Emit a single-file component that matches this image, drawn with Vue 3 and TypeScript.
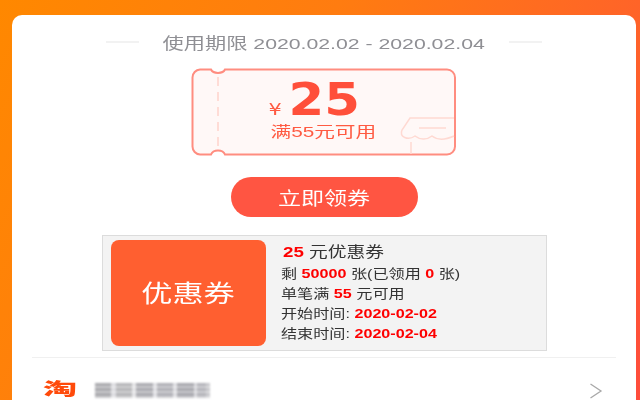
<script setup lang="ts">
const blocks: { w: number; c: string }[] = [
  { w: 16, c: '#a9a9ad' }, { w: 5, c: '#dcdce0' }, { w: 16, c: '#b5b5b8' }, { w: 4, c: '#e4e4e6' },
  { w: 17, c: '#aaaab0' }, { w: 4, c: '#e0e0e4' }, { w: 16, c: '#b0b0b6' }, { w: 4, c: '#dedee2' },
  { w: 17, c: '#a8a8ae' }, { w: 3, c: '#d8d8dc' }, { w: 9, c: '#b4b4ba' }, { w: 4, c: '#c8c8cc' }
]
</script>

<template>
  <div class="page">
    <main class="card">
      <header class="period">
        <span class="rule"></span>
        <div class="period-box"><span class="period-text">使用期限 2020.02.02 - 2020.02.04</span></div>
        <span class="rule"></span>
      </header>

      <section class="ticket">
        <svg class="ticket-bg" width="266" height="88" viewBox="0 0 266 88" fill="none">
          <path d="M9 1.500H20C22 6 32 6 34 1.500H256A8 8 0 0 1 264 9.500V78.500A8 8 0 0 1 256 86.500H34C32 81 22 81 20 86.500H9A8 8 0 0 1 1.500 78.500V9.500A8 8 0 0 1 9 1.500Z" fill="#fff8f7" stroke="#ff8d80" stroke-width="2"/>
          <path d="M27 9V84" stroke="#ffdcd6" stroke-width="2" stroke-dasharray="9 6"/>
          <path d="M263 50H219L211 62C208 69 217 73 224 68C229 72 236 72 241 68C246 72 254 72 263 68" stroke="#ffd9d2" stroke-width="1.500"/>
          <path d="M228 60H255M220 74V86" stroke="#ffd9d2" stroke-width="1.500"/>
        </svg>
        <div class="amount">
          <span class="yen">¥</span>
          <span class="value">25</span>
        </div>
        <div class="threshold">满55元可用</div>
      </section>

      <button class="claim" type="button"><span>立即领券</span></button>

      <section class="info">
        <div class="badge"><span>优惠券</span></div>
        <div class="details">
          <div class="title"><b>25</b> 元优惠券</div>
          <div class="line">剩 <b>50000</b> 张(已领用 <b>0</b> 张)</div>
          <div class="line">单笔满 <b>55</b> 元可用</div>
          <div class="line">开始时间: <b>2020-02-02</b></div>
          <div class="line">结束时间: <b>2020-02-04</b></div>
        </div>
      </section>

      <footer class="shop">
        <span class="tao">淘</span>
        <div class="blur-name">
          <i v-for="(b, i) in blocks" :key="i" :style="{ width: b.w + 'px', background: b.c }"></i>
        </div>
        <svg class="chevron" width="14" height="16" viewBox="0 0 14 16" fill="none">
          <path d="M1.500 1L12 8L1.500 15" stroke="#a8a8a8" stroke-width="1.300"/>
        </svg>
      </footer>
    </main>
  </div>
</template>

<style>
html, body { margin: 0; overflow: hidden; }
</style>

<style scoped>
.page {
  box-sizing: border-box;
  width: 640px;
  height: 400px;
  overflow: hidden;
  padding: 15px 4px 0 12px;
  background: linear-gradient(118deg, #ff8800 0%, #ff7c10 40%, #ff6428 75%, #ff4c3c 100%);
  font-family: "Noto Sans CJK SC", "Liberation Sans", sans-serif;
}
.card {
  height: 385px;
  padding: 0 20px;
  background: #fff;
  border-radius: 10px 10px 0 0;
  display: flex;
  flex-direction: column;
  align-items: center;
}
.period {
  margin-top: 17px;
  height: 20px;
  display: flex;
  align-items: center;
  gap: 24px;
}
.rule { width: 33px; height: 2px; background: #f2f2f2; }
.period-box { width: 322px; display: flex; justify-content: center; }
.period-text {
  flex: none;
  font-family: "Liberation Sans", "Noto Sans CJK SC", sans-serif;
  font-size: 15.500px;
  color: #8f8f94;
  white-space: nowrap;
  transform: scaleX(1.370);
}
.ticket {
  position: relative;
  margin-top: 16px;
  width: 266px;
  height: 88px;
  flex: none;
  display: flex;
  flex-direction: column;
  align-items: center;
}
.ticket-bg { position: absolute; left: 0; top: 0; }
.amount {
  position: relative;
  display: flex;
  align-items: baseline;
  margin-top: 10px;
  margin-left: -22px;
  height: 44px;
}
.yen {
  font-family: "DejaVu Sans", sans-serif;
  font-size: 16px;
  color: #ff5a42;
  margin-right: 13px;
  transform: scaleX(1.300);
}
.value {
  font-family: "DejaVu Sans", sans-serif;
  font-weight: 700;
  font-size: 45px;
  line-height: 44px;
  color: #ff4f3a;
  transform: scaleX(1.140);
}
.threshold {
  position: relative;
  margin-left: -1px;
  font-family: "Liberation Sans", "Noto Sans CJK SC", sans-serif;
  font-size: 15px;
  line-height: 20px;
  color: #ff5a42;
  white-space: nowrap;
  transform: scaleX(1.380);
}
.claim {
  flex: none;
  margin-top: 21px;
  width: 187px;
  height: 40px;
  border: 0;
  border-radius: 20px;
  background: #ff5542;
  color: #fff;
  font-family: "Noto Sans CJK SC", sans-serif;
  font-size: 18px;
  padding: 0;
}
.claim span { display: inline-block; transform: scaleX(1.280); }
.info {
  flex: none;
  box-sizing: border-box;
  margin-top: 18px;
  width: 445px;
  height: 116px;
  padding: 4px 8px;
  background: #f3f3f3;
  border: 1px solid #dcdcdc;
  display: flex;
  gap: 15px;
}
.badge {
  box-sizing: border-box;
  width: 155px;
  height: 106px;
  padding-bottom: 4px;
  flex: none;
  border-radius: 8px;
  background: #ff5f30;
  color: #fff;
  font-size: 24px;
  display: flex;
  align-items: center;
  justify-content: center;
}
.badge span { transform: scaleX(1.300); }
.details {
  padding-top: 2px;
  color: #333;
  white-space: nowrap;
  font-family: "Liberation Sans", "Noto Sans CJK SC", sans-serif;
}
.details b { color: #fe0000; }
.title {
  font-size: 15px;
  line-height: 20px;
  margin-left: 2px;
  margin-bottom: 2px;
  transform: scaleX(1.250);
  transform-origin: left center;
}
.line {
  font-size: 13px;
  line-height: 20px;
  transform: scaleX(1.240);
  transform-origin: left center;
}
.shop {
  flex: none;
  align-self: stretch;
  margin-top: 6px;
  height: 42px;
  border-top: 1px solid #f0f0f0;
  display: flex;
  align-items: flex-start;
  position: relative;
}
.tao {
  margin-left: 11px;
  margin-top: 20px;
  font-size: 17px;
  line-height: 20px;
  font-weight: 900;
  color: #ff4a0a;
  transform: scaleX(2);
  transform-origin: left center;
  width: 33px;
}
.blur-name {
  position: relative;
  margin-left: 19px;
  margin-top: 25px;
  height: 15px;
  display: flex;
  filter: blur(0.800px);
}
.blur-name::after {
  content: "";
  position: absolute;
  inset: 0;
  background: repeating-linear-gradient(0deg, rgba(255, 255, 255, 0.4) 0 2px, transparent 2px 5px);
}
.blur-name i { display: block; height: 15px; }
.chevron { margin-left: auto; margin-right: 13px; margin-top: 25px; }
</style>
